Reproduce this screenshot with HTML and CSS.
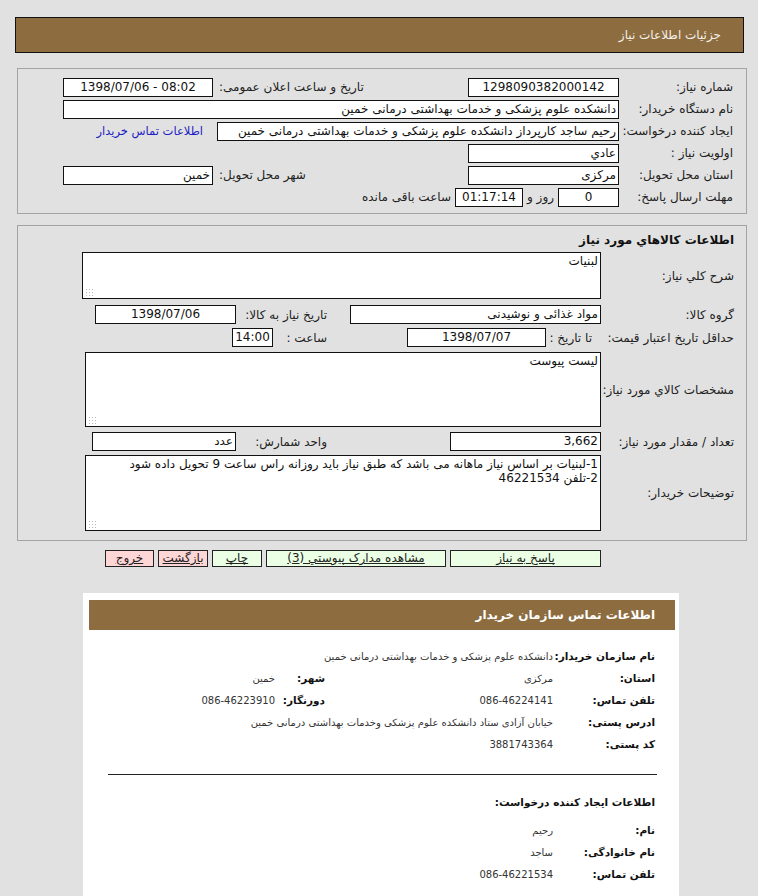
FILE: index.html
```html
<!DOCTYPE html>
<html lang="fa" dir="rtl">
<head>
<meta charset="utf-8">
<title>جزئیات اطلاعات نیاز</title>
<link rel="stylesheet" href="styles.css">
</head>
<body>
<div class="titlebar">جزئیات اطلاعات نیاز</div>

<div class="panel p1">
  <div class="row">
    <span class="lbl">شماره نیاز:</span>
    <span class="box w151 c">1298090382000142</span>
    <span class="side"><span class="lbl-near">تاریخ و ساعت اعلان عمومی:</span><span class="box w150 c ltr">1398/07/06 - 08:02</span></span>
  </div>
  <div class="row">
    <span class="lbl">نام دستگاه خریدار:</span>
    <span class="box grow">دانشکده علوم پزشکی و خدمات بهداشتی درمانی خمین</span>
  </div>
  <div class="row">
    <span class="lbl">ایجاد کننده درخواست:</span>
    <span class="box w402">رحیم ساجد کارپرداز دانشکده علوم پزشکی و خدمات بهداشتی درمانی خمین</span>
    <a class="contact" href="#">اطلاعات تماس خریدار</a>
  </div>
  <div class="row">
    <span class="lbl">اولویت نیاز :</span>
    <span class="box w151">عادي</span>
  </div>
  <div class="row">
    <span class="lbl">استان محل تحویل:</span>
    <span class="box w151">مرکزی</span>
    <span class="side"><span class="lbl-near">شهر محل تحویل:</span><span class="box w150">خمین</span></span>
  </div>
  <div class="row">
    <span class="lbl">مهلت ارسال پاسخ:</span>
    <span class="box w61 c">0</span>
    <span class="word">روز و</span>
    <span class="box w68 c">01:17:14</span>
    <span class="word">ساعت باقی مانده</span>
  </div>
</div>

<div class="panel p2">
  <div class="ptitle">اطلاعات كالاهاي مورد نياز</div>
  <div class="row2">
    <span class="lbl2">شرح کلي نياز:</span>
    <div class="area a1">لبنیات<span class="grip"></span></div>
  </div>
  <div class="row2 mt6">
    <span class="lbl2">گروه کالا:</span>
    <span class="box w251">مواد غذائی و نوشیدنی</span>
    <span class="cellB">تاریخ نیاز به کالا:</span>
    <span class="box w141 c">1398/07/06</span>
  </div>
  <div class="row2 mt4">
    <span class="lbl2 wide">حداقل تاریخ اعتبار قیمت:</span>
    <span class="cellTo">تا تاریخ :</span>
    <span class="box w139 c">1398/07/07</span>
    <span class="cellTime">ساعت :</span>
    <span class="box w41 c">14:00</span>
  </div>
  <div class="row2 mt5">
    <span class="lbl2">مشخصات كالاي مورد نياز:</span>
    <div class="area a2">لیست پیوست<span class="grip"></span></div>
  </div>
  <div class="row2 mt5">
    <span class="lbl2">تعداد / مقدار مورد نیاز:</span>
    <span class="box w151">3,662</span>
    <span class="cellE">واحد شمارش:</span>
    <span class="box w144">عدد</span>
  </div>
  <div class="row2 mt4">
    <span class="lbl2">توضیحات خریدار:</span>
    <div class="area a3">1-لبنیات بر اساس نیاز ماهانه می باشد که طبق نیاز باید روزانه راس ساعت 9 تحویل داده شود<br>2-تلفن 46221534<span class="grip"></span></div>
  </div>
</div>

<div class="buttons">
  <span class="btn green b151">پاسخ به نیاز</span>
  <span class="btn green b180">مشاهده مدارک پیوستي (3)</span>
  <span class="btn green b51">چاپ</span>
  <span class="btn pink b51">بازگشت</span>
  <span class="btn pink b50">خروج</span>
</div>

<div class="card">
  <div class="cardhead">اطلاعات تماس سازمان خریدار</div>
  <div class="info">
    <span class="k">نام سازمان خریدار:</span>
    <span class="v span3">دانشکده علوم پزشکی و خدمات بهداشتی درمانی خمین</span>

    <span class="k">استان:</span>
    <span class="v">مرکزی</span>
    <span class="k2">شهر:</span>
    <span class="v">خمین</span>

    <span class="k">تلفن تماس:</span>
    <span class="v">086-46224141</span>
    <span class="k2">دورنگار:</span>
    <span class="v">086-46223910</span>

    <span class="k">ادرس پستی:</span>
    <span class="v span3">خیابان آزادی ستاد دانشکده علوم پزشکی وخدمات بهداشتی درمانی خمین</span>

    <span class="k">کد پستی:</span>
    <span class="v span3">3881743364</span>
  </div>
  <div class="sep"></div>
  <div class="subhead">اطلاعات ایجاد کننده درخواست:</div>
  <div class="info info2">
    <span class="k">نام:</span>
    <span class="v span3">رحیم</span>
    <span class="k">نام خانوادگی:</span>
    <span class="v span3">ساجد</span>
    <span class="k">تلفن تماس:</span>
    <span class="v span3">086-46221534</span>
  </div>
</div>
</body>
</html>
```

FILE: styles.css
```css
html, body {
  margin: 0;
  padding: 0;
}
body {
  background: #e1e1e1;
  font-family: "DejaVu Sans", sans-serif;
  font-size: 12px;
  color: #222;
  direction: rtl;
  overflow: hidden;
  height: 896px;
}

.titlebar {
  box-sizing: border-box;
  margin: 17px 14px 0 15px;
  height: 36px;
  border: 1px solid #111;
  background: #8d6c40;
  color: #f4f0e8;
  font-size: 12px;
  line-height: 34px;
  padding-right: 22px;
}

.panel {
  box-sizing: border-box;
  width: 730px;
  margin-left: 17px;
  margin-right: auto;
  border: 1px solid #a3a3a3;
  background: #e1e1e1;
}
.p1 {
  margin-top: 15px;
  height: 146px;
  padding: 7px 13px 0 45px;
}
.p2 {
  margin-top: 11px;
  height: 316px;
  padding: 6px 12px 0 0;
}

.row {
  display: flex;
  align-items: center;
  height: 22px;
}
.lbl {
  width: 114px;
  flex: none;
  white-space: nowrap;
}
.box {
  box-sizing: border-box;
  flex: none;
  height: 19px;
  border: 1px solid #111;
  background: #fff;
  color: #111;
  line-height: 17px;
  padding: 0 2px;
  white-space: nowrap;
  overflow: hidden;
  text-align: right;
}
.box.c { text-align: center; }
.box.ltr { direction: ltr; }
.grow { flex: 1; }
.w41 { width: 41px; }
.w61 { width: 61px; }
.w68 { width: 68px; }
.w139 { width: 139px; }
.w141 { width: 141px; }
.w144 { width: 144px; }
.w150 { width: 150px; }
.w151 { width: 151px; }
.w251 { width: 251px; }
.w402 { width: 402px; }

.side {
  margin-right: auto;
  display: flex;
  align-items: center;
}
.lbl-near {
  margin-left: 6px;
  white-space: nowrap;
}
.contact {
  margin-right: 14px;
  color: #1c1cc4;
  text-decoration: none;
  white-space: nowrap;
  font-size: 11.5px;
}
.word {
  margin: 0 4px;
  white-space: nowrap;
}

.ptitle {
  font-weight: bold;
  font-size: 12px;
  color: #111;
  height: 20px;
  line-height: 16px;
}
.row2 {
  display: flex;
  align-items: center;
}
.mt4 { margin-top: 4px; }
.mt5 { margin-top: 5px; }
.mt6 { margin-top: 6px; }
.lbl2 {
  width: 133px;
  flex: none;
  white-space: nowrap;
}
.lbl2.wide { width: 138px; }
.cellB, .cellE, .cellTo, .cellTime {
  box-sizing: border-box;
  flex: none;
  white-space: nowrap;
}
.cellB { width: 114px; padding-right: 23px; }
.cellE { width: 214px; padding-right: 123px; }
.cellTo { width: 50px; padding-right: 4px; }
.cellTime { width: 134px; padding-right: 80px; }

.area {
  position: relative;
  box-sizing: border-box;
  flex: none;
  background: #fff;
  border: 1px solid #111;
  color: #111;
  padding: 1px 2px;
  line-height: 14px;
  overflow: hidden;
}
.a1 { width: 519px; height: 47px; }
.a2 { width: 516px; height: 75px; }
.a3 { width: 516px; height: 76px; }
.grip {
  position: absolute;
  left: 2px;
  bottom: 2px;
  width: 8px;
  height: 8px;
  background-image: radial-gradient(circle, #b8b8b8 0.7px, transparent 0.9px);
  background-size: 3px 3px;
}

.buttons {
  display: flex;
  gap: 4px;
  margin: 9px 157px 0 0;
  height: 17px;
}
.btn {
  box-sizing: border-box;
  height: 17px;
  border: 1px solid #222;
  text-align: center;
  line-height: 14px;
  font-size: 12px;
  color: #222;
  text-decoration: underline;
  white-space: nowrap;
}
.green { background: #eaffe4; }
.pink { background: #ffd6d6; }
.b50 { width: 49px; }
.b51 { width: 50px; }
.b151 { width: 151px; }
.b180 { width: 180px; }

.card {
  box-sizing: border-box;
  width: 596px;
  margin: 26px 0 0 0;
  margin-left: 83px;
  margin-right: auto;
  background: #fff;
  padding: 7px 4px 0 6px;
  height: 320px;
}
.cardhead {
  height: 30px;
  background: #8d6c40;
  color: #fff;
  font-weight: bold;
  font-size: 12px;
  line-height: 30px;
  padding-right: 20px;
}
.info {
  display: grid;
  grid-template-columns: 102px 228px 50px auto;
  grid-auto-rows: 22px;
  align-items: center;
  padding-right: 20px;
  margin-top: 15px;
}
.info2 { margin-top: 9px; }
.k, .k2 {
  font-weight: bold;
  font-size: 10.5px;
  color: #111;
  white-space: nowrap;
}
.v {
  font-size: 10px;
  color: #333;
  white-space: nowrap;
}
.span3 { grid-column: span 3; }
.sep {
  height: 1px;
  background: #222;
  margin: 19px 18px 0 19px;
}
.subhead {
  font-weight: bold;
  font-size: 10.5px;
  color: #111;
  padding-right: 20px;
  margin-top: 19px;
  line-height: 16px;
}
```
